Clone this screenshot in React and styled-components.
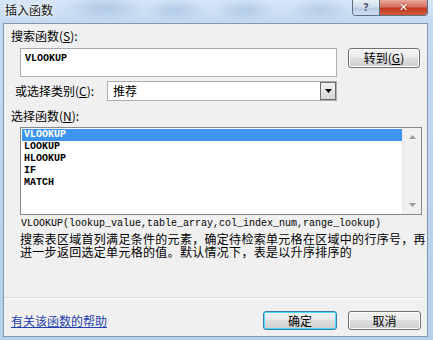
import React from "react";
import styled, { createGlobalStyle } from "styled-components";

const Global = createGlobalStyle`
  html, body { margin: 0; padding: 0; background: #b9d3ee; }
  body { font-family: "Noto Sans CJK SC", "Noto Sans", sans-serif; }
`;

const CJK = `"Noto Sans CJK SC", "Noto Sans", sans-serif`;
const MONO = `"Liberation Mono", "DejaVu Sans Mono", monospace`;

const Window = styled.div`
  width: 433px;
  height: 340px;
  display: flex;
  flex-direction: column;
  overflow: hidden;
  background:
    radial-gradient(ellipse 40px 14px at 105px 8px, rgba(150,180,215,0.55), transparent),
    radial-gradient(ellipse 30px 12px at 175px 10px, rgba(150,180,215,0.5), transparent),
    radial-gradient(ellipse 30px 12px at 245px 10px, rgba(150,180,215,0.5), transparent),
    radial-gradient(ellipse 30px 12px at 320px 10px, rgba(150,180,215,0.45), transparent),
    linear-gradient(to bottom, #d6e6f6 0px, #c3d9f0 24px, #b6d0ec 100%);
`;

const TitleBar = styled.div`
  height: 23px;
  flex: none;
  display: flex;
  align-items: flex-start;
  padding-left: 5px;
`;

const Title = styled.div`
  font-family: ${CJK};
  font-size: 12px;
  line-height: 20px;
  color: #111;
  text-shadow: 0 0 6px #fff, 0 0 3px #fff;
`;

const Caption = styled.div`
  margin-left: auto;
  margin-right: 5px;
  display: flex;
  height: 15px;
  border: 1px solid #5b6f86;
  border-top: none;
  border-radius: 0 0 4px 4px;
  overflow: hidden;
`;

const CapBtn = styled.div`
  width: ${(p) => p.$w}px;
  height: 15px;
  display: flex;
  align-items: center;
  justify-content: center;
  font-family: "DejaVu Sans", sans-serif;
  font-weight: bold;
  font-size: ${(p) => (p.$close ? 11 : 10)}px;
  color: ${(p) => (p.$close ? "#fff" : "#4c5d74")};
  background: ${(p) =>
    p.$close
      ? "linear-gradient(to bottom, #e9a99c 0%, #d4705e 45%, #c0391f 55%, #d35a3e 100%)"
      : "linear-gradient(to bottom, #e9eff7 0%, #d3dfec 45%, #bccde2 55%, #cfdcec 100%)"};
  border-left: ${(p) => (p.$close ? "1px solid #5b6f86" : "none")};
  text-shadow: ${(p) => (p.$close ? "0 0 2px #7a1a0a" : "0 0 2px #fff")};
`;

const Client = styled.div`
  flex: none;
  height: 312px;
  margin: 0 5px 3px 3px;
  border: 1px solid #8597ad;
  background: #f0f0f0;
  display: flex;
  flex-direction: column;
  font-family: ${CJK};
  font-size: 12px;
  color: #000;
`;

const Label = styled.div`
  font-size: 12px;
  line-height: 14px;
  margin-top: ${(p) => p.$top}px;
  padding-left: ${(p) => p.$left}px;
  white-space: nowrap;
`;

const Row = styled.div`
  display: flex;
  align-items: ${(p) => p.$align || "flex-start"};
  margin-top: ${(p) => p.$top}px;
  padding-left: ${(p) => p.$left}px;
  gap: ${(p) => p.$gap || 0}px;
`;

const TextBox = styled.div`
  width: 317px;
  height: 29px;
  box-sizing: border-box;
  border: 1px solid #abadb3;
  border-top-color: #a4a8b0;
  background: #fff;
  font-family: ${MONO};
  font-size: 10px;
  font-weight: bold;
  line-height: 12px;
  padding: 4px 0 0 4px;
`;

const Button = styled.div`
  width: ${(p) => p.$w}px;
  height: ${(p) => p.$h || 20}px;
  box-sizing: border-box;
  border: 1px solid ${(p) => (p.$default ? "#3d7bad" : "#707070")};
  border-radius: 3px;
  background: linear-gradient(to bottom, #f2f2f2 0%, #ebebeb 49%, #dddddd 50%, #cfcfcf 100%);
  box-shadow: inset 0 0 0 1px ${(p) => (p.$default ? "#48dcf8" : "#fcfcfc")};
  display: flex;
  align-items: center;
  justify-content: center;
  font-size: 12px;
  line-height: 14px;
  color: #000;
`;

const CategoryLabel = styled.div`
  width: 92px;
  font-size: 12px;
  line-height: 14px;
  white-space: nowrap;
`;

const Select = styled.div`
  width: 230px;
  height: 20px;
  box-sizing: border-box;
  border: 1px solid #abadb3;
  background: #fff;
  display: flex;
  align-items: stretch;
`;

const SelectText = styled.div`
  flex: 1;
  padding-left: 5px;
  font-size: 12px;
  line-height: 18px;
`;

const DropBtn = styled.div`
  width: 16px;
  box-sizing: border-box;
  border: 1px solid #6d6d6d;
  background: linear-gradient(to bottom, #f4f4f4, #d6d6d6);
  display: flex;
  align-items: center;
  justify-content: center;
`;

const List = styled.div`
  width: 402px;
  height: 88px;
  margin: 4px 0 0 16px;
  box-sizing: border-box;
  border: 1px solid #828790;
  background: #fff;
  display: flex;
`;

const Items = styled.div`
  flex: 1;
  padding: 1px 0 0 1px;
`;

const Item = styled.div`
  height: 12px;
  line-height: 12px;
  padding-left: 2px;
  font-family: ${MONO};
  font-size: 10px;
  font-weight: bold;
  color: ${(p) => (p.$sel ? "#fff" : "#000")};
  background: ${(p) => (p.$sel ? "#3d95ef" : "transparent")};
`;

const ScrollBar = styled.div`
  width: 18px;
  background: #f0f0f0;
  border-left: 1px solid #e6e6e6;
  display: flex;
  flex-direction: column;
  justify-content: space-between;
  align-items: center;
  padding: 7px 0 7px;
`;

const Signature = styled.div`
  margin-top: 3px;
  padding-left: 17px;
  font-family: ${MONO};
  font-size: 10px;
  line-height: 12px;
  white-space: nowrap;
`;

const Desc = styled.div`
  margin-top: 2px;
  padding-left: 16px;
  font-size: 12px;
  line-height: 13px;
  letter-spacing: 0.3px;
  white-space: nowrap;
`;

const Separator = styled.div`
  margin: auto 4px 0 0;
  height: 1px;
  background: #d5d5d5;
  border-bottom: 1px solid #fff;
`;

const Footer = styled.div`
  display: flex;
  align-items: center;
  height: 19px;
  margin: 12px 6px 6px 0;
  padding-left: 7px;
  gap: 11px;
`;

const HelpLink = styled.a`
  margin-right: auto;
  color: #1f3fae;
  text-decoration: underline;
  font-size: 12px;
  line-height: 14px;
  cursor: pointer;
`;

const Tri = ({ up, color = "#000", w = 7, h = 4 }) => (
  <svg width={w} height={h} viewBox={`0 0 ${w} ${h}`}>
    <polygon
      points={up ? `0,${h} ${w},${h} ${w / 2},0` : `0,0 ${w},0 ${w / 2},${h}`}
      fill={color}
    />
  </svg>
);

export default function App() {
  return (
    <>
      <Global />
      <Window>
        <TitleBar>
          <Title>插入函数</Title>
          <Caption>
            <CapBtn $w={26}>?</CapBtn>
            <CapBtn $w={47} $close>✕</CapBtn>
          </Caption>
        </TitleBar>
        <Client>
          <Label $top={5} $left={7}>
            搜索函数(<u>S</u>):
          </Label>
          <Row $top={5} $left={16} $gap={11}>
            <TextBox>VLOOKUP</TextBox>
            <Button $w={72}>转到(<u>G</u>)</Button>
          </Row>
          <Row $top={4} $left={11} $align="center">
            <CategoryLabel>
              或选择类别(<u>C</u>):
            </CategoryLabel>
            <Select>
              <SelectText>推荐</SelectText>
              <DropBtn>
                <Tri w={7} h={4} />
              </DropBtn>
            </Select>
          </Row>
          <Label $top={8} $left={7}>
            选择函数(<u>N</u>):
          </Label>
          <List>
            <Items>
              {["VLOOKUP", "LOOKUP", "HLOOKUP", "IF", "MATCH"].map((f, i) => (
                <Item key={f} $sel={i === 0}>
                  {f}
                </Item>
              ))}
            </Items>
            <ScrollBar>
              <Tri up w={7} h={4} color="#9a9a9a" />
              <Tri w={7} h={4} color="#9a9a9a" />
            </ScrollBar>
          </List>
          <Signature>
            VLOOKUP(lookup_value,table_array,col_index_num,range_lookup)
          </Signature>
          <Desc>
            搜索表区域首列满足条件的元素，确定待检索单元格在区域中的行序号，再
            <br />
            进一步返回选定单元格的值。默认情况下，表是以升序排序的
          </Desc>
          <Separator />
          <Footer>
            <HelpLink>有关该函数的帮助</HelpLink>
            <Button $w={74} $h={19} $default>确定</Button>
            <Button $w={73} $h={19}>取消</Button>
          </Footer>
        </Client>
      </Window>
    </>
  );
}
